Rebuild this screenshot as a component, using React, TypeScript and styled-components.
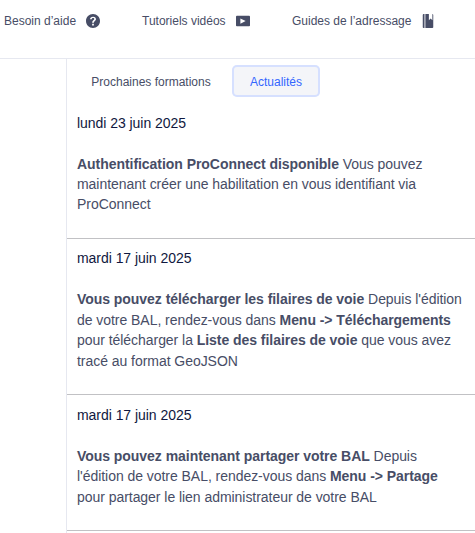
import React from "react";
import styled, { createGlobalStyle } from "styled-components";

const Global = createGlobalStyle`
  * { box-sizing: border-box; }
  body { margin: 0; background: #fff; overflow: hidden; font-family: "Liberation Sans", Arial, sans-serif; }
`;
const Page = styled.div`width: 475px; height: 533px; overflow: hidden; display: flex; flex-direction: column;`;
const Nav = styled.nav`display: flex; align-items: flex-start; height: 59px; padding: 13px 0 0 4px; flex: none; border-bottom: 1px solid #e6e8f0;`;
const NavLink = styled.a<{ $width: number }>`
  display: flex; align-items: center; justify-content: space-between; height: 16px;
  width: ${(p) => p.$width}px; margin-right: 42px; flex: none;
  font-size: 12px; line-height: 16px; color: #474d66; white-space: nowrap;
  svg { flex: none; width: 14px; height: 14px; fill: #474d66; }
`;
const Panel = styled.main`flex: 1; margin-left: 66px; border-left: 1px solid #e6e8f0;`;
const Tabs = styled.div`display: flex; padding: 6px 0 0 8px; height: 44.4px;`;
const Tab = styled.button<{ $active?: boolean; $width: number }>`
  width: ${(p) => p.$width}px; height: 32px; padding: 2px 0 0; border: 0; border-radius: 5px;
  font: 12px/30px "Liberation Sans", Arial, sans-serif;
  color: ${(p) => (p.$active ? "#3366ff" : "#474d66")};
  background: ${(p) => (p.$active ? "#f4f5f9" : "transparent")};
  box-shadow: ${(p) => (p.$active ? "inset 0 0 0 2px #d6e0ff" : "none")};
  & + & { margin-left: 5px; }
`;
const Item = styled.article<{ $height: number }>`
  height: ${(p) => p.$height}px; padding: 9.2px 0 0 10px; border-bottom: 1px solid #c1c1c4;
  letter-spacing: -0.045px;
`;
const Day = styled.h2`margin: 0; font-size: 14px; font-weight: 400; line-height: 20px; color: #101840;`;
const Body = styled.p`margin: 21px 0 0; font-size: 14px; line-height: 20.43px; color: #474d66; white-space: nowrap;`;

export default function App() {
  return (
    <Page>
      <Global />
      <Nav>
        <NavLink $width={96}>Besoin d’aide
          <svg viewBox="0 0 16 16"><path fillRule="evenodd" d="M8 0C3.580 0 0 3.580 0 8s3.580 8 8 8 8-3.580 8-8-3.580-8-8-8zM7 11h2v2H7v-2zm4.400-4.600c-.2 1.400-2.400 1.800-2.400 3.600H7c0-2.400 2-2.900 2.400-4C9.700 5 9 4.600 8.100 4.600c-1 0-1.500.5-1.500 1.400h-2C4.600 4.100 6 3 8.100 3s3.600 1.200 3.300 3.400z"/></svg>
        </NavLink>
        <NavLink $width={108}>Tutoriels vidéos
          <svg viewBox="0 0 16 16"><path fillRule="evenodd" d="M15 2H1c-.55 0-1 .45-1 1v10c0 .55.45 1 1 1h14c.55 0 1-.45 1-1V3c0-.55-.45-1-1-1zM5 11V5l6 3-6 3z"/></svg>
        </NavLink>
        <NavLink $width={143}>Guides de l’adressage
          <svg viewBox="0 0 16 16"><path d="M2 1v14c0 .55.45 1 1 1h1V0H3c-.55 0-1 .45-1 1zM13 0v7l-2-2-2 2V0H5v16h8c.55 0 1-.45 1-1V1c0-.55-.45-1-1-1z"/></svg>
        </NavLink>
      </Nav>
      <Panel>
        <Tabs><Tab $width={152}>Prochaines formations</Tab><Tab $width={88} $active>Actualités</Tab></Tabs>
        <Item $height={135.8}><Day>lundi 23 juin 2025</Day>
          <Body><b>Authentification ProConnect disponible</b> Vous pouvez<br />maintenant créer une habilitation en vous identifiant via<br />ProConnect</Body></Item>
        <Item $height={156.27}><Day>mardi 17 juin 2025</Day>
          <Body><b>Vous pouvez télécharger les filaires de voie</b> Depuis l'édition<br />de votre BAL, rendez-vous dans <b>Menu -&gt; Téléchargements</b><br />pour télécharger la <b>Liste des filaires de voie</b> que vous avez<br />tracé au format GeoJSON</Body></Item>
        <Item $height={135.7}><Day>mardi 17 juin 2025</Day>
          <Body><b>Vous pouvez maintenant partager votre BAL</b> Depuis<br />l'édition de votre BAL, rendez-vous dans <b>Menu -&gt; Partage</b><br />pour partager le lien administrateur de votre BAL</Body></Item>
      </Panel>
    </Page>
  );
}
